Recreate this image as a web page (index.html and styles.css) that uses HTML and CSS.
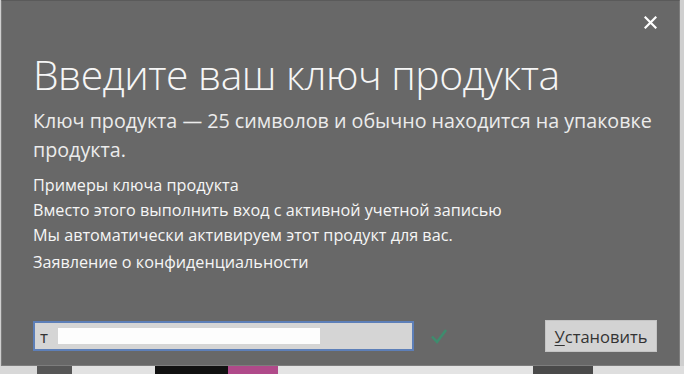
FILE: index.html
```html
<!DOCTYPE html>
<html lang="ru">
<head>
<meta charset="utf-8">
<title>Введите ваш ключ продукта</title>
<link rel="stylesheet" href="styles.css">
</head>
<body>
<div class="screen">
  <div class="dialog">
    <div class="topbar">
      <button class="close" aria-label="Закрыть">
        <svg width="13" height="13" viewBox="0 0 13 13"><path d="M1.5 1.5 L11.5 11.5 M11.5 1.5 L1.5 11.5" stroke="#fff" stroke-width="2.2" stroke-linecap="square"/></svg>
      </button>
    </div>
    <h1 class="title">Введите ваш ключ продукта</h1>
    <p class="subtitle">Ключ продукта — 25 символов и обычно находится на упаковке продукта.</p>
    <ul class="links">
      <li>Примеры ключа продукта</li>
      <li>Вместо этого выполнить вход с активной учетной записью</li>
      <li>Мы автоматически активируем этот продукт для вас.</li>
      <li class="privacy">Заявление о конфиденциальности</li>
    </ul>
    <div class="actions">
      <div class="keybox">
        <span class="typed">т</span><span class="redact"></span>
      </div>
      <svg class="check" width="18" height="18" viewBox="0 0 18 18"><path d="M2 9.5 L7 15 L16 3" fill="none" stroke="#3f8c6e" stroke-width="2.6"/></svg>
      <button class="install"><u>У</u>становить</button>
    </div>
  </div>
  <div class="strip">
    <span class="s1"></span><span class="s2"></span><span class="s3"></span><span class="s4"></span><span class="s5"></span><span class="s6"></span><span class="s7"></span><span class="s8"></span>
  </div>
</div>
</body>
</html>
```
FILE: styles.css
```css
* { box-sizing: border-box; }
html, body { margin: 0; padding: 0; }
body {
  width: 684px;
  height: 374px;
  overflow: hidden;
  background: #cfcfcf;
  font-family: "Open Sans", "Noto Sans", sans-serif;
}
.screen {
  display: flex;
  flex-direction: column;
  width: 684px;
  height: 374px;
}
.dialog {
  width: 679px;
  height: 366px;
  margin-left: 1px;
  background: #686868;
  border: 1px solid #7d7d7d;
  border-top-color: #5a5a5a;
  padding: 0 0 0 31px;
  color: #f4f4f4;
  display: flex;
  flex-direction: column;
}
.topbar {
  height: 46px;
  display: flex;
  justify-content: flex-end;
  padding: 15px 21px 0 0;
}
.close {
  width: 14px;
  height: 14px;
  padding: 0;
  border: 0;
  background: none;
  display: flex;
}
.title {
  margin: 0;
  font-weight: 300;
  font-size: 40.8px;
  line-height: 54px;
  letter-spacing: -0.5px;
  color: #f6f6f6;
}
.subtitle {
  margin: 5px 0 0;
  width: 630px;
  font-size: 19.7px;
  line-height: 29px;
  color: #ececec;
  letter-spacing: 0;
}
.links {
  list-style: none;
  margin: 9px 0 0;
  padding: 0;
  font-size: 16.2px;
  line-height: 25px;
  color: #f6f6f6;
  letter-spacing: 0;
}
.links .privacy { margin-top: 2px; }
.actions {
  margin-top: auto;
  margin-bottom: 13px;
  display: flex;
  align-items: center;
}
.keybox {
  width: 381px;
  height: 30px;
  background: #d5d5d5;
  border: 2px solid #5d7fb8;
  display: flex;
  align-items: center;
  padding-left: 5px;
  font-size: 17px;
  color: #333;
}
.typed { width: 18px; }
.redact {
  width: 262px;
  height: 16px;
  background: #fdfdfd;
}
.check { margin-left: 16px; }
.install {
  margin-left: auto;
  margin-right: 22px;
  width: 112px;
  height: 32px;
  border: 1px solid #c4c4c4;
  background: #d3d3d3;
  color: #333;
  font-family: "Open Sans", "Noto Sans", sans-serif;
  font-size: 16.5px;
  padding: 0;
}
.install u { text-underline-offset: 2px; }
.strip {
  flex: 1;
  display: flex;
}
.strip span { height: 100%; }
.s1 { width: 37px; background: #d8d8d8; }
.s2 { width: 35px; background: #565656; }
.s3 { width: 83px; background: #e2e2e2; }
.s4 { width: 73px; background: #111; }
.s5 { width: 50px; background: #b04a8a; }
.s6 { width: 255px; background: #e4e4e4; }
.s7 { width: 60px; background: #4a4a4a; }
.s8 { flex: 1; background: #dedede; }
```
